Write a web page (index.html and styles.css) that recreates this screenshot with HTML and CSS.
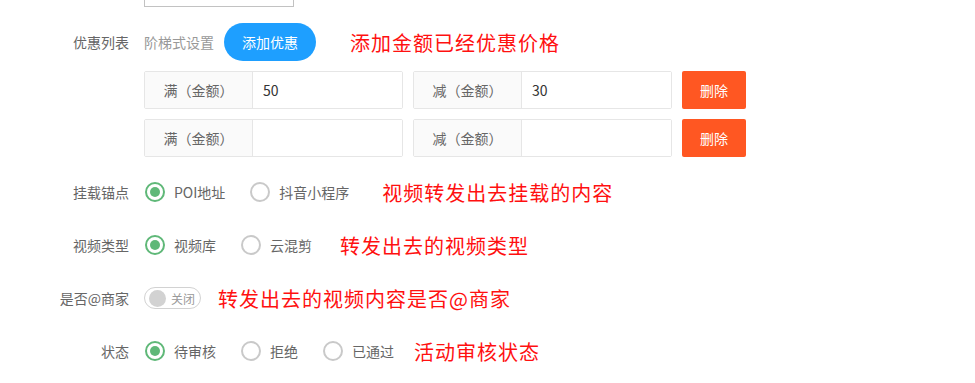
FILE: index.html
```html
<!DOCTYPE html>
<html lang="zh-CN">
<head>
    <meta charset="UTF-8">
    <meta name="viewport" content="width=device-width, initial-scale=1.0">
    <title>活动设置</title>
    <link rel="stylesheet" href="styles.css">
</head>
<body>
    <div class="form">
        <!-- image box cut off at top -->
        <div class="form-item top-item">
            <div class="form-label"></div>
            <div class="upload-box"></div>
        </div>

        <div class="form-item first-item">
            <label class="form-label">优惠列表</label>
            <span class="hint">阶梯式设置</span>
            <button class="btn btn-blue">添加优惠</button>
            <span class="note note-1">添加金额已经优惠价格</span>
        </div>

        <div class="discount-list">
            <div class="discount-row">
                <div class="input-group">
                    <span class="addon">满（金额）</span>
                    <input class="input" type="text" value="50">
                </div>
                <div class="input-group">
                    <span class="addon">减（金额）</span>
                    <input class="input" type="text" value="30">
                </div>
                <button class="btn btn-danger">删除</button>
            </div>
            <div class="discount-row">
                <div class="input-group">
                    <span class="addon">满（金额）</span>
                    <input class="input" type="text" value="">
                </div>
                <div class="input-group">
                    <span class="addon">减（金额）</span>
                    <input class="input" type="text" value="">
                </div>
                <button class="btn btn-danger">删除</button>
            </div>
        </div>

        <div class="form-item">
            <label class="form-label">挂载锚点</label>
            <div class="radio checked"><i class="radio-icon"></i><span>POI地址</span></div>
            <div class="radio"><i class="radio-icon"></i><span>抖音小程序</span></div>
            <span class="note note-2">视频转发出去挂载的内容</span>
        </div>

        <div class="form-item">
            <label class="form-label">视频类型</label>
            <div class="radio checked"><i class="radio-icon"></i><span>视频库</span></div>
            <div class="radio"><i class="radio-icon"></i><span>云混剪</span></div>
            <span class="note note-3">转发出去的视频类型</span>
        </div>

        <div class="form-item">
            <label class="form-label">是否@商家</label>
            <div class="switch"><i class="knob"></i><em>关闭</em></div>
            <span class="note note-4">转发出去的视频内容是否@商家</span>
        </div>

        <div class="form-item">
            <label class="form-label">状态</label>
            <div class="radio checked"><i class="radio-icon"></i><span>待审核</span></div>
            <div class="radio"><i class="radio-icon"></i><span>拒绝</span></div>
            <div class="radio"><i class="radio-icon"></i><span>已通过</span></div>
            <span class="note note-5">活动审核状态</span>
        </div>
    </div>
</body>
</html>
```

FILE: styles.css
```css
body {
  margin: 0;
  background: #fff;
  font-family: "Noto Sans CJK SC", "Microsoft YaHei", sans-serif;
  font-size: 14px;
  color: #666;
}

.form-item {
  display: flex;
  align-items: center;
  height: 38px;
  margin-bottom: 15px;
}

.top-item {
  height: 7px;
  align-items: flex-start;
  margin-bottom: 16px;
}

.upload-box {
  width: 148px;
  height: 6px;
  border: 1px solid #c2c2c2;
  border-top: none;
}

.first-item {
  margin-bottom: 10px;
}

.form-label {
  width: 144px;
  box-sizing: border-box;
  padding-right: 15px;
  text-align: right;
  color: #666;
  flex-shrink: 0;
  line-height: 20px;
}

.hint {
  color: #999;
  margin-right: 10px;
}

.btn {
  height: 38px;
  border: none;
  font-family: inherit;
  font-size: 14px;
  color: #fff;
  cursor: pointer;
  padding: 0;
}

.btn-blue {
  width: 92px;
  border-radius: 19px;
  background-color: #1e9fff;
}

.btn-danger {
  width: 64px;
  border-radius: 2px;
  background-color: #ff5722;
}

.note {
  color: #ff1010;
  font-size: 20px;
  letter-spacing: 1px;
}

.note-1 { margin-left: 34px; }
.note-2 { margin-left: 8px; }
.note-3 { margin-left: 3px; }
.note-4 { margin-left: 17px; }
.note-5 { margin-left: -5px; }

/* discount rows */
.discount-list {
  padding-left: 144px;
  margin-bottom: 16px;
}

.discount-row {
  display: flex;
  gap: 10px;
  margin-bottom: 10px;
}

.discount-row:last-child {
  margin-bottom: 0;
}

.input-group {
  display: flex;
  width: 259px;
  height: 38px;
  box-sizing: border-box;
  border: 1px solid #e6e6e6;
  border-radius: 2px;
}

.addon {
  width: 108px;
  flex-shrink: 0;
  box-sizing: border-box;
  border-right: 1px solid #e6e6e6;
  background-color: #fafafa;
  display: flex;
  align-items: center;
  justify-content: center;
  color: #666;
}

.input {
  flex: 1;
  min-width: 0;
  border: none;
  outline: none;
  padding: 0 10px;
  font-family: inherit;
  font-size: 14px;
  color: #333;
  background: #fff;
}

/* radios */
.radio {
  display: flex;
  align-items: center;
  margin-right: 25px;
  margin-left: 1px;
  color: #666;
}

.radio + .radio {
  margin-left: 0;
}

.radio-icon {
  width: 20px;
  height: 20px;
  box-sizing: border-box;
  border: 2px solid #c9c9c9;
  border-radius: 50%;
  margin-right: 9px;
  display: flex;
  align-items: center;
  justify-content: center;
}

.radio.checked .radio-icon {
  border-color: #5fb878;
}

.radio.checked .radio-icon::after {
  content: "";
  width: 10px;
  height: 10px;
  border-radius: 50%;
  background-color: #5fb878;
}

/* switch */
.switch {
  display: flex;
  align-items: center;
  width: 57px;
  height: 22px;
  box-sizing: border-box;
  border: 1px solid #d2d2d2;
  border-radius: 11px;
  padding-left: 4px;
}

.knob {
  width: 17px;
  height: 17px;
  border-radius: 50%;
  background-color: #d2d2d2;
}

.switch em {
  font-style: normal;
  font-size: 12px;
  color: #999;
  margin-left: 5px;
}
```
